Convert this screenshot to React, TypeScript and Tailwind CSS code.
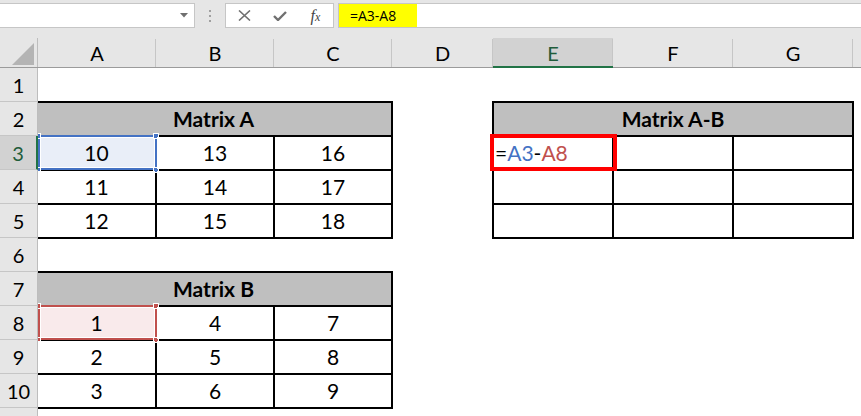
const COLS = [
  { label: "A", w: "w-[118px]" },
  { label: "B", w: "w-[118px]" },
  { label: "C", w: "w-[118px]" },
  { label: "D", w: "w-[101px]" },
  { label: "E", w: "w-[120px]", active: true },
  { label: "F", w: "w-[120px]" },
  { label: "G", w: "w-[120px]" },
];

const ROWS = [1, 2, 3, 4, 5, 6, 7, 8, 9, 10];

function Toolbar() {
  return (
    <div className="flex h-[38px] items-start bg-[#e6e6e6] pt-[3px]">
      <div className="flex h-[25px] w-[195px] items-center justify-end border border-l-0 border-[#c6c6c6] bg-white pr-[6px]">
        <svg width="8" height="5" viewBox="0 0 8 5">
          <path d="M0 0h8L4 4.5z" fill="#6f6f6f" />
        </svg>
      </div>
      <div className="flex h-[25px] w-[30px] flex-col items-center justify-center gap-[3px]">
        <span className="h-[2px] w-[2px] bg-[#a0a0a0]" />
        <span className="h-[2px] w-[2px] bg-[#a0a0a0]" />
        <span className="h-[2px] w-[2px] bg-[#a0a0a0]" />
      </div>
      <div className="flex h-[25px] w-[109px] items-center border border-[#c6c6c6] bg-white pl-[1px]">
        <span className="flex w-[36px] justify-center">
          <svg width="13" height="11" viewBox="0 0 13 11">
            <path d="M1 0.5l11 10M12 0.5l-11 10" stroke="#707070" strokeWidth="1.6" />
          </svg>
        </span>
        <span className="flex w-[36px] justify-center">
          <svg width="14" height="10" viewBox="0 0 14 10">
            <path d="M1 5l4 4L13 1" stroke="#707070" strokeWidth="2.4" fill="none" />
          </svg>
        </span>
        <span className="flex w-[36px] items-baseline justify-center font-['Liberation_Serif',serif] text-[16px] italic leading-none text-[#444]">
          f<span className="text-[12px]">x</span>
        </span>
      </div>
      <div className="ml-[4px] flex h-[25px] flex-1 items-stretch border border-r-0 border-[#c6c6c6] bg-white">
        <div className="flex w-[78px] items-center bg-[#ffff00] pl-[11px] font-['Open_Sans',sans-serif] text-[14px] text-black">
          =A3-A8
        </div>
      </div>
    </div>
  );
}

function ColumnHeaders() {
  return (
    <div className="flex h-[30px] border-b border-[#9b9b9b] bg-[#e6e6e6]">
      <div className="relative w-[38px] border-r border-[#bdbdbd]">
        <svg className="absolute left-[12px] top-[5px]" width="22" height="22" viewBox="0 0 22 22">
          <path d="M22 0V22H0z" fill="#b4b4b4" />
        </svg>
      </div>
      {COLS.map((c) => (
        <div
          key={c.label}
          className={`relative flex items-center justify-center text-[20px] ${c.w} ${
            c.active ? "bg-[#d2d2d2] text-[#1f5c3a]" : "text-black"
          }`}
        >
          {c.label}
          <span className="absolute bottom-0 right-0 top-[1px] w-px bg-[#c6c6c6]" />
          {c.active && <span className="absolute -bottom-px left-0 right-0 h-[2px] bg-[#217346]" />}
        </div>
      ))}
    </div>
  );
}

function RowHeaders() {
  return (
    <div className="w-[38px] shrink-0 bg-[#e6e6e6]">
      {ROWS.map((r) => (
        <div
          key={r}
          className={`flex h-[34px] items-center justify-center border-b border-[#c6c6c6] text-[20px] ${
            r === 3
              ? "border-r-2 border-r-[#217346] bg-[#d2d2d2] text-[#1f5c3a]"
              : "border-r border-r-[#bdbdbd] text-black"
          }`}
        >
          {r}
        </div>
      ))}
      <div className="h-[10px] border-r border-[#bdbdbd]" />
    </div>
  );
}

function Selection({ color, fill }: { color: string; fill: string }) {
  return (
    <div className={`absolute -top-[2px] -bottom-px left-0 -right-[2px] ${fill}`}>
      <div className={`absolute inset-0 border-2 shadow-[inset_0_0_0_1px_#fff] ${color}`} />
      <span className={`absolute -left-[3px] -top-[2px] h-[6px] w-[6px] border border-white ${color} bg-current`} />
      <span className={`absolute -right-[2px] -top-[2px] h-[6px] w-[6px] border border-white ${color} bg-current`} />
      <span className={`absolute -bottom-[3px] -left-[3px] h-[6px] w-[6px] border border-white ${color} bg-current`} />
      <span className={`absolute -bottom-[3px] -right-[2px] h-[6px] w-[6px] border border-white ${color} bg-current`} />
    </div>
  );
}

function Matrix({
  title,
  values,
  sel,
}: {
  title: string;
  values: number[][];
  sel: "blue" | "red";
}) {
  return (
    <div className="-mt-px grid h-[138px] w-[355px] grid-cols-[117px_116px_116px] grid-rows-[32px_32px_32px_32px] gap-[2px] self-start bg-black py-[2px] pr-[2px]">
      <div className="col-span-3 flex items-center justify-center bg-[#bfbfbf] pr-[2px] text-[21px] font-bold">
        {title}
      </div>
      {values.flatMap((row, ri) =>
        row.map((v, ci) => {
          const selected = ri === 0 && ci === 0;
          return (
            <div key={`${ri}-${ci}`} className="relative flex items-center justify-center bg-white text-[21px]">
              {selected && (
                <Selection
                  color={sel === "blue" ? "border-[#4472c4] text-[#4472c4]" : "border-[#c0504d] text-[#c0504d]"}
                  fill={sel === "blue" ? "bg-[#e9eef8]" : "bg-[#f9eaeb]"}
                />
              )}
              <span className="relative">{v}</span>
            </div>
          );
        })
      )}
    </div>
  );
}

function ResultMatrix() {
  return (
    <div className="-ml-px -mt-px grid h-[138px] w-[362px] grid-cols-[118px_118px_118px] grid-rows-[32px_32px_32px_32px] gap-[2px] self-start bg-black p-[2px]">
      <div className="col-span-3 flex items-center justify-center bg-[#bfbfbf] text-[21px] font-bold">
        Matrix A-B
      </div>
      <div className="relative flex items-center bg-white text-[21px]">
        <div className="absolute -bottom-[2px] -left-[4px] -right-[5px] -top-[3px] border-[4px] border-[#ff0000]" />
        <span className="relative pl-[1px]">
          =<span className="text-[#4472c4]">A3</span>-<span className="text-[#c0504d]">A8</span>
        </span>
      </div>
      {Array.from({ length: 8 }).map((_, i) => (
        <div key={i} className="bg-white" />
      ))}
    </div>
  );
}

export default function App() {
  return (
    <div className="h-[416px] w-[861px] overflow-hidden bg-white font-['Lato',sans-serif] text-black">
      <Toolbar />
      <ColumnHeaders />
      <div className="flex">
        <RowHeaders />
        <div className="grid h-[348px] flex-1 grid-cols-[118px_118px_118px_101px_120px_120px_120px_1fr] grid-rows-[34px_repeat(9,34px)_1fr] overflow-hidden">
          <div className="col-span-3 col-start-1 row-span-4 row-start-2 flex">
            <Matrix title="Matrix A" values={[[10, 13, 16], [11, 14, 17], [12, 15, 18]]} sel="blue" />
          </div>
          <div className="col-span-3 col-start-5 row-span-4 row-start-2 flex">
            <ResultMatrix />
          </div>
          <div className="col-span-3 col-start-1 row-span-4 row-start-7 flex">
            <Matrix title="Matrix B" values={[[1, 4, 7], [2, 5, 8], [3, 6, 9]]} sel="red" />
          </div>
        </div>
      </div>
    </div>
  );
}
